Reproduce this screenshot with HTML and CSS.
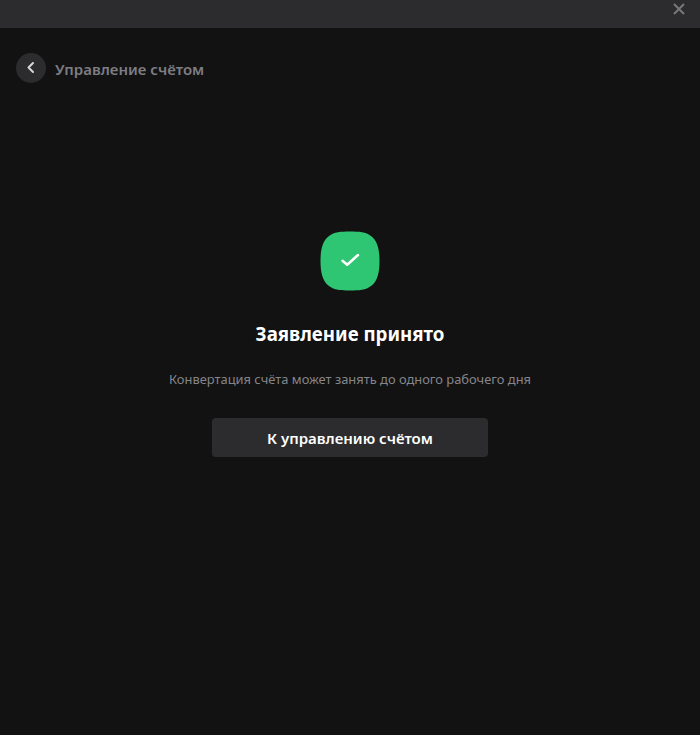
FILE: index.html
```html
<!DOCTYPE html>
<html lang="ru">
<head>
    <meta charset="UTF-8">
    <meta name="viewport" content="width=device-width, initial-scale=1.0">
    <title>Управление счётом</title>
    <link rel="stylesheet" href="styles.css">
</head>
<body>
    <div class="titlebar">
        <button class="close" aria-label="Закрыть">
            <svg width="12" height="12" viewBox="0 0 12 12"><path d="M1 1L11 11M11 1L1 11"/></svg>
        </button>
    </div>

    <div class="nav">
        <button class="back" aria-label="Назад">
            <svg width="30" height="30" viewBox="0 0 30 30"><path d="M17 10L12.5 14.5L17 19"/></svg>
        </button>
        <span class="nav-title">Управление счётом</span>
    </div>

    <main class="result">
        <svg class="badge" width="60" height="60" viewBox="0 0 60 60">
            <path class="badge-bg" d="M30 .5C39 .5 46 1 51 5C58 10 59.5 20 59.5 30C59.5 40 58 50 51 55C46 59 39 59.5 30 59.5C21 59.5 14 59 9 55C2 50 .5 40 .5 30C.5 20 2 10 9 5C14 1 21 .5 30 .5Z"/>
            <path class="badge-check" d="M22.5 29.8L27.2 33.8L38 24"/>
        </svg>
        <h1>Заявление принято</h1>
        <p>Конвертация счёта может занять до одного рабочего дня</p>
        <button class="primary">К управлению счётом</button>
    </main>
</body>
</html>
```

FILE: styles.css
```css
* {
    box-sizing: border-box;
}
html, body {
    height: 100%;
}
body {
    margin: 0;
    background: #121212;
    font-family: "Noto Sans", "Open Sans", sans-serif;
    color: #fff;
    overflow: hidden;
}
button {
    border: none;
    padding: 0;
    font-family: inherit;
    cursor: pointer;
}
.titlebar {
    height: 28px;
    background: #2c2c2e;
    display: flex;
    justify-content: flex-end;
}
.close {
    width: 42px;
    height: 17px;
    background: none;
    display: flex;
    align-items: center;
    justify-content: center;
}
.close path {
    stroke: #77777a;
    stroke-width: 2;
    fill: none;
}
.nav {
    display: flex;
    align-items: center;
    gap: 9px;
    padding: 25px 16px 0;
}
.back {
    width: 30px;
    height: 30px;
    border-radius: 50%;
    background: #2c2c2e;
    display: flex;
}
.back path {
    stroke: #d6d6d8;
    stroke-width: 2;
    stroke-linecap: round;
    stroke-linejoin: round;
    fill: none;
}
.nav-title {
    padding-top: 2px;
    font-size: 15px;
    font-weight: 600;
    color: #7d7d84;
}
.result {
    display: flex;
    flex-direction: column;
    align-items: center;
    padding-top: 148px;
}
.badge-bg {
    fill: #2fc673;
}
.badge-check {
    stroke: #fff;
    stroke-width: 2.5;
    stroke-linecap: round;
    stroke-linejoin: round;
    fill: none;
}
h1 {
    margin: 28px 0 0;
    font-size: 18.7px;
    font-weight: 700;
    line-height: 30px;
}
p {
    margin: 20px 0 0;
    font-size: 12.9px;
    line-height: 20px;
    color: #85858b;
}
.primary {
    margin-top: 29px;
    width: 276px;
    height: 39px;
    border-radius: 4px;
    background: #2c2c2e;
    color: #fff;
    font-size: 15px;
    font-weight: 600;
}
```
